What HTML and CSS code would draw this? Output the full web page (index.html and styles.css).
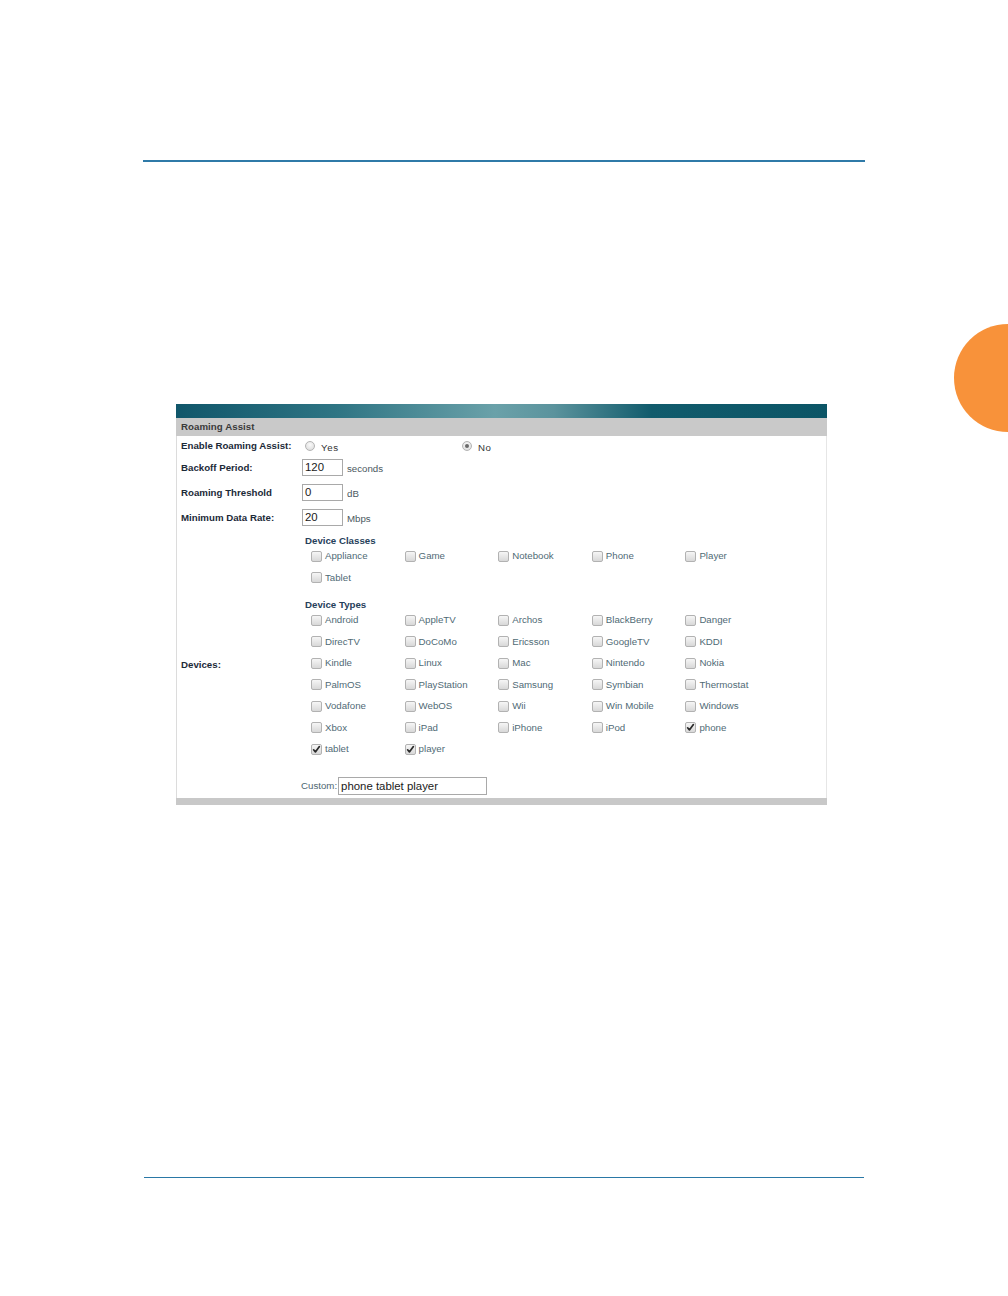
FILE: index.html
```html
<!DOCTYPE html>
<html>
<head>
<meta charset="utf-8">
<link rel="stylesheet" href="styles.css">
</head>
<body>
<div class="page">
  <div class="tab-circle"></div>
  <div class="rule rule-top"></div>

  <div class="panel">
    <div class="band"></div>
    <div class="title">Roaming Assist</div>
    <div class="body">
      <div class="row row-enable">
        <div class="label">Enable Roaming Assist:</div>
        <div class="field">
          <div class="opt opt-yes"><span class="radio"></span><span class="opt-text">Yes</span></div>
          <div class="opt"><span class="radio on"></span><span class="opt-text">No</span></div>
        </div>
      </div>
      <div class="row">
        <div class="label">Backoff Period:</div>
        <div class="field"><span class="input small">120</span><span class="unit">seconds</span></div>
      </div>
      <div class="row">
        <div class="label">Roaming Threshold</div>
        <div class="field"><span class="input small">0</span><span class="unit">dB</span></div>
      </div>
      <div class="row">
        <div class="label">Minimum Data Rate:</div>
        <div class="field"><span class="input small">20</span><span class="unit">Mbps</span></div>
      </div>

      <div class="devices">
        <div class="label dev-label">Devices:</div>
        <div class="dev-content">
          <div class="heading heading-classes">Device Classes</div>
          <div class="grid">
            <div class="item"><span class="cb"></span>Appliance</div>
            <div class="item"><span class="cb"></span>Game</div>
            <div class="item"><span class="cb"></span>Notebook</div>
            <div class="item"><span class="cb"></span>Phone</div>
            <div class="item"><span class="cb"></span>Player</div>
            <div class="item"><span class="cb"></span>Tablet</div>
          </div>
          <div class="heading heading-types">Device Types</div>
          <div class="grid">
            <div class="item"><span class="cb"></span>Android</div>
            <div class="item"><span class="cb"></span>AppleTV</div>
            <div class="item"><span class="cb"></span>Archos</div>
            <div class="item"><span class="cb"></span>BlackBerry</div>
            <div class="item"><span class="cb"></span>Danger</div>
            <div class="item"><span class="cb"></span>DirecTV</div>
            <div class="item"><span class="cb"></span>DoCoMo</div>
            <div class="item"><span class="cb"></span>Ericsson</div>
            <div class="item"><span class="cb"></span>GoogleTV</div>
            <div class="item"><span class="cb"></span>KDDI</div>
            <div class="item"><span class="cb"></span>Kindle</div>
            <div class="item"><span class="cb"></span>Linux</div>
            <div class="item"><span class="cb"></span>Mac</div>
            <div class="item"><span class="cb"></span>Nintendo</div>
            <div class="item"><span class="cb"></span>Nokia</div>
            <div class="item"><span class="cb"></span>PalmOS</div>
            <div class="item"><span class="cb"></span>PlayStation</div>
            <div class="item"><span class="cb"></span>Samsung</div>
            <div class="item"><span class="cb"></span>Symbian</div>
            <div class="item"><span class="cb"></span>Thermostat</div>
            <div class="item"><span class="cb"></span>Vodafone</div>
            <div class="item"><span class="cb"></span>WebOS</div>
            <div class="item"><span class="cb"></span>Wii</div>
            <div class="item"><span class="cb"></span>Win Mobile</div>
            <div class="item"><span class="cb"></span>Windows</div>
            <div class="item"><span class="cb"></span>Xbox</div>
            <div class="item"><span class="cb"></span>iPad</div>
            <div class="item"><span class="cb"></span>iPhone</div>
            <div class="item"><span class="cb"></span>iPod</div>
            <div class="item"><span class="cb checked"><svg viewBox="0 0 11 11" width="11" height="11"><path d="M2.6 5.8 L4.4 7.9 L8.4 2.6" fill="none" stroke="#2a2a2a" stroke-width="1.7" stroke-linecap="round" stroke-linejoin="round"/></svg></span>phone</div>
            <div class="item"><span class="cb checked"><svg viewBox="0 0 11 11" width="11" height="11"><path d="M2.6 5.8 L4.4 7.9 L8.4 2.6" fill="none" stroke="#2a2a2a" stroke-width="1.7" stroke-linecap="round" stroke-linejoin="round"/></svg></span>tablet</div>
            <div class="item"><span class="cb checked"><svg viewBox="0 0 11 11" width="11" height="11"><path d="M2.6 5.8 L4.4 7.9 L8.4 2.6" fill="none" stroke="#2a2a2a" stroke-width="1.7" stroke-linecap="round" stroke-linejoin="round"/></svg></span>player</div>
          </div>
          <div class="custom">
            <span class="custom-label">Custom:</span><span class="input wide">phone tablet player</span>
          </div>
        </div>
      </div>
    </div>
    <div class="bottom-bar"></div>
  </div>

  <div class="rule rule-bottom"></div>
</div>
</body>
</html>
```

FILE: styles.css
```css
* { box-sizing: border-box; }

html, body {
  margin: 0;
  padding: 0;
  background: #ffffff;
}

body {
  font-family: "Liberation Sans", Arial, sans-serif;
}

.page {
  position: relative;
  width: 1008px;
  height: 1296px;
  overflow: hidden;
  padding-top: 160px;
}

.tab-circle {
  position: absolute;
  left: 954px;
  top: 324px;
  width: 108px;
  height: 108px;
  border-radius: 50%;
  background: #f8923a;
}

.rule {
  background: #2f7aa8;
}

.rule-top {
  margin-left: 143px;
  width: 722px;
  height: 2px;
}

.rule-bottom {
  margin-left: 144px;
  width: 720px;
  height: 1px;
  margin-top: 372px;
  background: #2a78a6;
}

.panel {
  margin-top: 242px;
  margin-left: 176px;
  width: 651px;
}

.band {
  height: 14px;
  background: linear-gradient(to right, #10566a 0%, #2f7584 25%, #6aa1a9 49%, #5b939d 58%, #115b6c 73%, #0b5566 100%);
}

.title {
  height: 18px;
  line-height: 18px;
  background: #c9c9c9;
  padding-left: 5px;
  font-size: 9.7px;
  font-weight: bold;
  color: #3a3a3a;
  letter-spacing: 0.05px;
}

.body {
  border-left: 1px solid #dcdcdc;
  border-right: 1px solid #e6e6e6;
  height: 362px;
}

.row {
  display: flex;
  align-items: center;
  height: 25px;
}

.row-enable {
  height: 19px;
}

.label {
  width: 125px;
  flex: none;
  padding-left: 4px;
  font-size: 9.7px;
  font-weight: bold;
  color: #1c2a38;
  white-space: nowrap;
}

.field {
  display: flex;
  align-items: center;
}

.opt {
  display: flex;
  align-items: center;
  padding-left: 3px;
}

.opt-yes {
  width: 157px;
}

.opt-text {
  font-size: 9.7px;
  color: #333;
  margin-left: 6px;
  padding-top: 4px;
  letter-spacing: 0.6px;
}

.radio {
  width: 10px;
  height: 10px;
  border-radius: 50%;
  border: 1px solid #b4b4b4;
  background: radial-gradient(circle at 50% 35%, #fafafa 0%, #e2e2e2 70%, #d4d4d4 100%);
  display: flex;
  align-items: center;
  justify-content: center;
}

.radio.on::after {
  content: "";
  width: 4px;
  height: 4px;
  border-radius: 50%;
  background: #6a6a6a;
}

.input {
  display: inline-block;
  border: 1px solid #a9a9a9;
  background: #fff;
  color: #1a1a1a;
  font-size: 11.4px;
  padding-left: 2px;
  white-space: nowrap;
}

.input.small {
  width: 41px;
  height: 17px;
  line-height: 15px;
}

.input.wide {
  width: 149px;
  height: 18px;
  line-height: 16px;
}

.unit {
  font-size: 9.7px;
  color: #4a5860;
  margin-left: 4px;
  padding-top: 2px;
}

.devices {
  display: flex;
  align-items: center;
  padding-top: 3px;
}

.dev-label {
  padding-top: 1px;
}

.dev-content {
  flex: 1;
}

.heading {
  line-height: 10px;
  padding-left: 3px;
  font-size: 9.7px;
  font-weight: bold;
  color: #26405a;
}

.heading-classes {
  height: 12px;
  padding-top: 4px;
  line-height: 8px;
}

.heading-types {
  height: 21px;
  padding-top: 12px;
  line-height: 9px;
}

.grid {
  display: grid;
  grid-template-columns: repeat(5, 93.6px);
  grid-auto-rows: 21.5px;
  padding-left: 9px;
}

.item {
  display: flex;
  align-items: center;
  gap: 3px;
  font-size: 9.7px;
  color: #4f6a75;
  white-space: nowrap;
}

.cb {
  width: 11px;
  height: 11px;
  flex: none;
  border: 1px solid #b2b2b2;
  border-radius: 2px;
  background: linear-gradient(to bottom, #f6f6f6 0%, #e4e4e4 60%, #d8d8d8 100%);
  display: flex;
  align-items: center;
  justify-content: center;
  margin-top: 1px;
}

.cb svg {
  display: block;
  margin: -1px;
}

.custom {
  display: flex;
  align-items: center;
  margin-top: 17px;
  margin-left: -1px;
}

.custom-label {
  font-size: 9.7px;
  color: #4d6671;
  margin-right: 1px;
}

.bottom-bar {
  height: 7px;
  background: #c8c8c8;
}
```
